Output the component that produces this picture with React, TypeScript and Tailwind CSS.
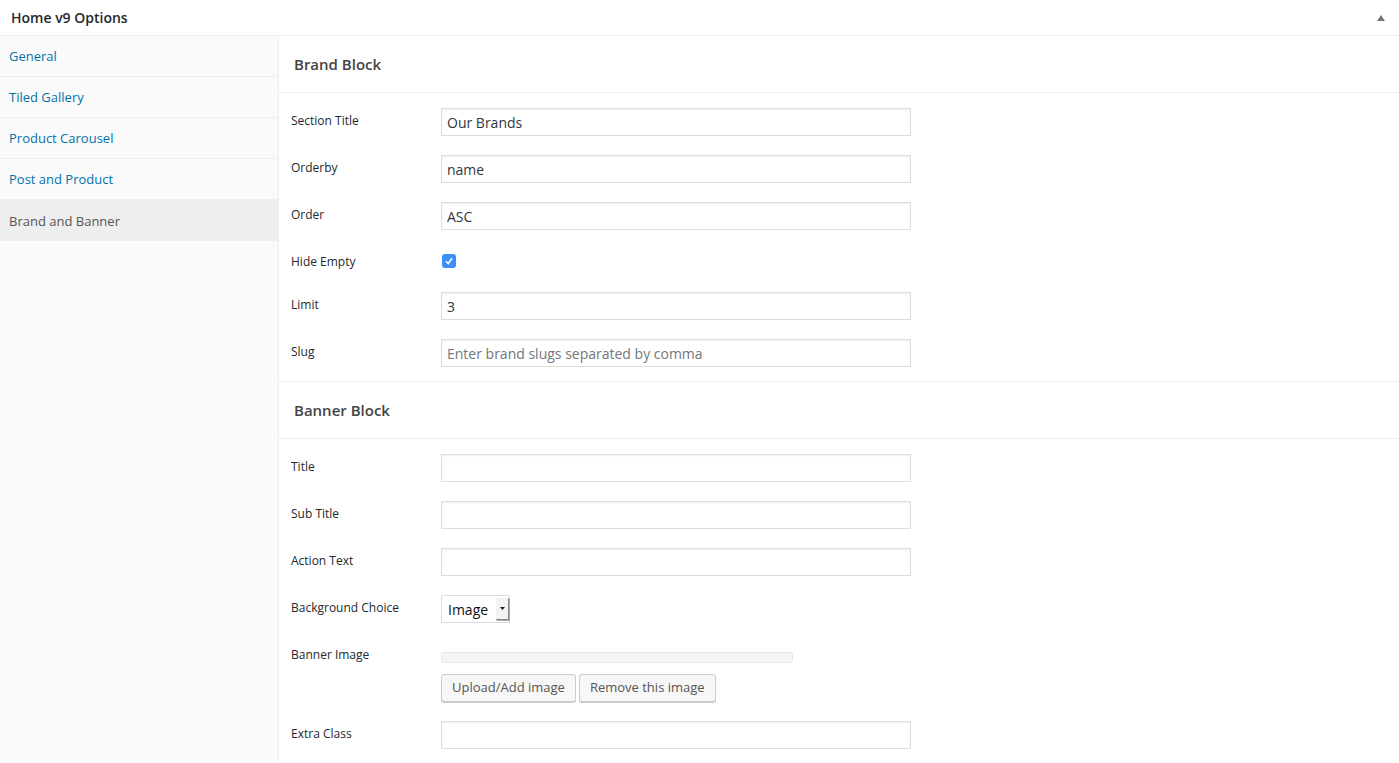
import React from 'react';

const font = { fontFamily: '"Open Sans", "Liberation Sans", sans-serif' };

const tabs = ['General', 'Tiled Gallery', 'Product Carousel', 'Post and Product', 'Brand and Banner'];

function Field({ label, children, tall }: { label: string; children: React.ReactNode; tall?: boolean }) {
  return (
    <div className={`flex ${tall ? '' : 'min-h-[28px]'}`}>
      <div className="w-[150px] shrink-0 pt-[5px] text-[12px] leading-[16px] text-[#23282d]">{label}</div>
      <div className="flex-1">{children}</div>
    </div>
  );
}

function TextInput({ value, placeholder }: { value?: string; placeholder?: string }) {
  return (
    <input
      readOnly
      value={value ?? ''}
      placeholder={placeholder}
      className="block h-[28px] w-[470px] border border-[#ddd] bg-white px-[5px] text-[14px] text-[#32373c] shadow-[inset_0_1px_2px_rgba(0,0,0,0.07)] outline-none placeholder:text-[#72777c]"
      style={font}
    />
  );
}

function Heading({ children }: { children: React.ReactNode }) {
  return (
    <div className="flex h-[57px] items-center border-b border-[#eee] pl-[15px] text-[15px] font-semibold text-[#444]">
      {children}
    </div>
  );
}

function Button({ children }: { children: React.ReactNode }) {
  return (
    <button
      className="h-[28px] rounded-[3px] border border-[#ccc] bg-[#f7f7f7] px-[10px] text-[13px] text-[#555] shadow-[0_1px_0_#ccc]"
      style={font}
    >
      {children}
    </button>
  );
}

export default function App() {
  return (
    <div className="min-h-[763px] w-full bg-white" style={font}>
      <div className="flex h-[36px] items-center justify-between border-b border-[#eee] pl-[11px] pr-[14px]">
        <span className="text-[14px] font-semibold text-[#23282d]">Home v9 Options</span>
        <svg width="8" height="6" viewBox="0 0 8 6">
          <path d="M4 0 L8 6 L0 6 Z" fill="#72777c" />
        </svg>
      </div>
      <div className="flex">
        <div className="min-h-[727px] w-[279px] shrink-0 border-r border-[#eee] bg-[#fafafa]">
          {tabs.map((t, i) => {
            const active = i === tabs.length - 1;
            return (
              <div
                key={t}
                className={`flex h-[41px] items-center pl-[9px] pt-[2px] text-[13px] ${
                  active ? 'bg-[#eee] text-[#555]' : 'border-b border-[#eee] text-[#0073aa]'
                }`}
              >
                {t}
              </div>
            );
          })}
        </div>
        <div className="flex-1">
          <Heading>Brand Block</Heading>
          <div className="flex flex-col gap-[19px] border-b border-[#eee] pl-[12px] pt-[15px] pb-[14px]">
            <Field label="Section Title"><TextInput value="Our Brands" /></Field>
            <Field label="Orderby"><TextInput value="name" /></Field>
            <Field label="Order"><TextInput value="ASC" /></Field>
            <div className="flex h-[24px]">
              <div className="w-[150px] shrink-0 pt-[5px] text-[12px] leading-[16px] text-[#23282d]">Hide Empty</div>
              <div className="pt-[5px] pl-[1px]">
                <div className="flex h-[14px] w-[14px] items-center justify-center rounded-[3px] bg-[#3b8ff6]">
                  <svg width="10" height="10" viewBox="0 0 10 10">
                    <path d="M2 5.2 L4.2 7.5 L8 2.2" stroke="#fff" strokeWidth="1.5" fill="none" />
                  </svg>
                </div>
              </div>
            </div>
            <Field label="Limit"><TextInput value="3" /></Field>
            <Field label="Slug"><TextInput placeholder="Enter brand slugs separated by comma" /></Field>
          </div>
          <Heading>Banner Block</Heading>
          <div className="flex flex-col gap-[19px] pl-[12px] pt-[15px] pb-[14px]">
            <Field label="Title"><TextInput /></Field>
            <Field label="Sub Title"><TextInput /></Field>
            <Field label="Action Text"><TextInput /></Field>
            <Field label="Background Choice">
              <div className="flex h-[28px] w-[69px] items-stretch border border-[#ddd] bg-white">
                <span className="flex flex-1 items-center pl-[6px] text-[14px] text-[#111]">Image</span>
                <span className="my-[2px] flex w-[13px] items-center justify-center border-r border-b border-[#888] bg-[#f3f3f3] shadow-[1px_1px_0_#aaa]">
                  <svg width="5" height="3" viewBox="0 0 5 3">
                    <path d="M0 0 L5 0 L2.5 3 Z" fill="#222" />
                  </svg>
                </span>
              </div>
            </Field>
            <Field label="Banner Image" tall>
              <div className="pt-[10px]">
                <div className="h-[11px] w-[352px] rounded-[3px] border border-[#e5e5e5] bg-[#f5f5f5]" />
                <div className="mt-[11px] flex gap-[3px]">
                  <Button>Upload/Add image</Button>
                  <Button>Remove this image</Button>
                </div>
              </div>
            </Field>
            <Field label="Extra Class"><TextInput /></Field>
          </div>
        </div>
      </div>
    </div>
  );
}
